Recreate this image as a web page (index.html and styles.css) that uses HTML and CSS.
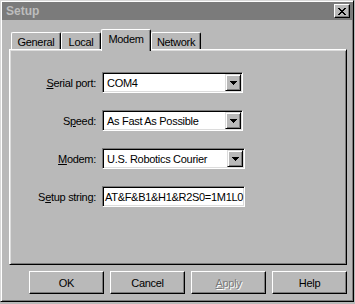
FILE: index.html
```html
<!DOCTYPE html>
<html lang="en">
<head>
  <meta charset="UTF-8">
  <meta name="viewport" content="width=device-width, initial-scale=1.0">
  <title>Setup</title>
  <link rel="stylesheet" href="styles.css">
</head>
<body>

  <div class="window">
    <div class="titlebar">
      <span class="title">Setup</span>
      <button class="close-btn">
        <svg width="8" height="7" viewBox="0 0 8 7" shape-rendering="crispEdges">
          <path d="M0 0h2v1H0zM6 0h2v1H6zM1 1h2v1H1zM5 1h2v1H5zM2 2h4v1H2zM3 3h2v1H3zM2 4h4v1H2zM1 5h2v1H1zM5 5h2v1H5zM0 6h2v1H0zM6 6h2v1H6z" fill="#000"/>
        </svg>
      </button>
    </div>

    <div class="main">
      <div class="tabs">
        <div class="tab tab-general">General</div>
        <div class="tab tab-local">Local</div>
        <div class="tab tab-modem active">Modem</div>
        <div class="tab tab-network">Network</div>
      </div>

      <div class="panel">
        <div class="form">
          <label class="label"><u>S</u>erial port:</label>
          <div class="combo">
            <span class="combo-text">COM4</span>
            <span class="drop">
              <svg width="7" height="4" viewBox="0 0 7 4" shape-rendering="crispEdges"><path d="M0 0h7v1H0zM1 1h5v1H1zM2 2h3v1H2zM3 3h1v1H3z" fill="#000"/></svg>
            </span>
          </div>

          <label class="label">S<u>p</u>eed:</label>
          <div class="combo">
            <span class="combo-text">As Fast As Possible</span>
            <span class="drop">
              <svg width="7" height="4" viewBox="0 0 7 4" shape-rendering="crispEdges"><path d="M0 0h7v1H0zM1 1h5v1H1zM2 2h3v1H2zM3 3h1v1H3z" fill="#000"/></svg>
            </span>
          </div>

          <label class="label"><u>M</u>odem:</label>
          <div class="combo combo-wide">
            <span class="combo-text">U.S. Robotics Courier</span>
            <span class="drop">
              <svg width="7" height="4" viewBox="0 0 7 4" shape-rendering="crispEdges"><path d="M0 0h7v1H0zM1 1h5v1H1zM2 2h3v1H2zM3 3h1v1H3z" fill="#000"/></svg>
            </span>
          </div>

          <label class="label">S<u>e</u>tup string:</label>
          <div class="edit">AT&amp;F&amp;B1&amp;H1&amp;R2S0=1M1L0</div>
        </div>
      </div>

      <div class="buttons">
        <button class="btn">OK</button>
        <button class="btn">Cancel</button>
        <button class="btn disabled"><u>A</u>pply</button>
        <button class="btn">Help</button>
      </div>
    </div>
  </div>

</body>
</html>
```

FILE: styles.css
```css
* { box-sizing: border-box; }
body {
  margin: 0;
  background: #b9b9b9;
  font-family: 'Liberation Sans', Arial, sans-serif;
  font-size: 11px;
  letter-spacing: -0.3px;
  color: #000;
}
.window {
  width: 354px;
  height: 302px;
  background: #b9b9b9;
  border: 1px solid;
  border-color: #d8d8d8 #000 #000 #d8d8d8;
  box-shadow: inset 1px 1px #fff, inset -1px -1px #7b7b7b;
  padding: 1px;
}
.titlebar {
  height: 18px;
  background: #7b7b7b;
  display: flex;
  align-items: center;
  justify-content: space-between;
  padding: 0 2px 0 4px;
}
.title {
  color: #bdbdbd;
  font-weight: bold;
  font-size: 12px;
  letter-spacing: 0;
}
.close-btn {
  width: 16px;
  height: 14px;
  padding: 0;
  display: flex;
  align-items: center;
  justify-content: center;
  background: #b9b9b9;
  border: 1px solid;
  border-color: #fff #000 #000 #fff;
  box-shadow: inset -1px -1px #7b7b7b;
}
.main {
  padding: 8px 5px 0 7px;
}
.tabs {
  height: 21px;
  display: flex;
  align-items: flex-end;
  padding-left: 2px;
}
.tab {
  height: 17px;
  display: flex;
  align-items: center;
  justify-content: center;
  border: 1px solid;
  border-bottom: none;
  border-color: #fff #000 #000 #fff;
  border-radius: 2px 2px 0 0;
  box-shadow: inset -1px 0 #7b7b7b;
  padding-top: 1px;
}
.tab-general { width: 50px; }
.tab-local { width: 40px; }
.tab-modem { width: 50px; }
.tab-network { width: 50px; }
.tab.active {
  position: relative;
  z-index: 1;
  height: 22px;
  margin-bottom: -2px;
  background: #b9b9b9;
  padding-top: 0;
  padding-bottom: 4px;
}
.panel {
  height: 216px;
  border: 1px solid;
  border-color: #fff #000 #000 #fff;
  box-shadow: inset 1px 1px #dcdcdc, inset -1px -1px #7b7b7b;
  padding: 22px 1px 1px 1px;
}
.form {
  display: grid;
  grid-template-columns: 85px auto;
  column-gap: 6px;
  row-gap: 17px;
  align-items: center;
}
.label {
  text-align: right;
  padding-top: 1px;
}
.combo {
  width: 141px;
  height: 21px;
  display: flex;
  align-items: stretch;
  background: #fff;
  border: 1px solid;
  border-color: #7b7b7b #fff #fff #7b7b7b;
  box-shadow: inset 1px 1px #000, inset -1px -1px #dcdcdc;
  padding: 1px;
}
.combo-wide { width: 143px; }
.combo-text {
  flex: 1;
  padding-left: 3px;
  display: flex;
  align-items: center;
  white-space: nowrap;
  overflow: hidden;
}
.drop {
  width: 16px;
  display: flex;
  align-items: center;
  justify-content: center;
  background: #b9b9b9;
  border: 1px solid;
  border-color: #dcdcdc #000 #000 #dcdcdc;
  box-shadow: inset 1px 1px #fff, inset -1px -1px #7b7b7b;
}
.edit {
  width: 143px;
  height: 21px;
  background: #fff;
  border: 1px solid;
  border-color: #7b7b7b #fff #fff #7b7b7b;
  box-shadow: inset 1px 1px #000, inset -1px -1px #dcdcdc;
  padding: 0 0 0 2px;
  display: flex;
  align-items: center;
  white-space: nowrap;
  overflow: hidden;
}
.buttons {
  display: flex;
  justify-content: flex-end;
  gap: 6px;
  margin-top: 6px;
}
.btn {
  width: 75px;
  height: 23px;
  padding: 0;
  font-family: inherit;
  font-size: 11px;
  letter-spacing: -0.3px;
  color: #000;
  background: #b9b9b9;
  border: 1px solid;
  border-color: #fff #000 #000 #fff;
  box-shadow: inset -1px -1px #7b7b7b;
}
.btn.disabled {
  color: #7b7b7b;
  text-shadow: 1px 1px #fff;
}
```
